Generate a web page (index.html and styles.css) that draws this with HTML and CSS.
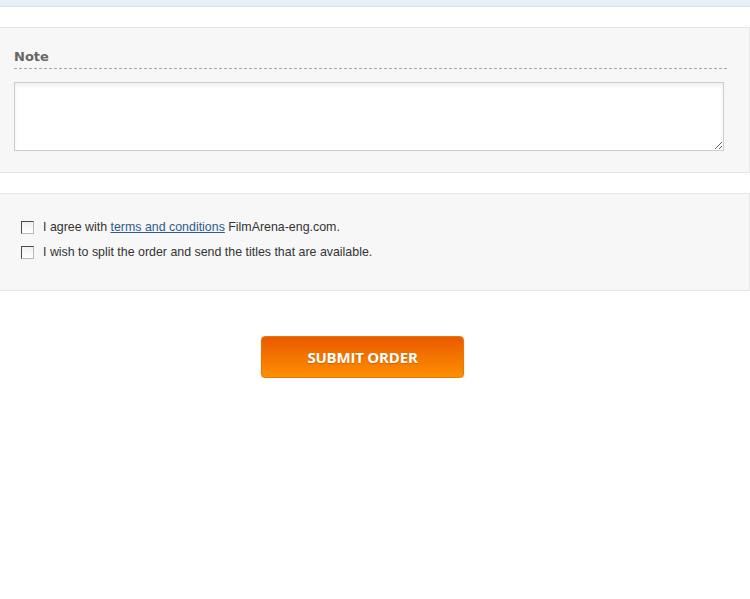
FILE: index.html
```html
<!DOCTYPE html>
<html lang="en">
  <head>
    <meta charset="UTF-8" />
    <meta name="viewport" content="width=device-width, initial-scale=1.0" />
    <title>Order - FilmArena</title>
    <link rel="stylesheet" href="styles.css">
  </head>
  <body>
    <div class="topbar"></div>

    <div class="panel note-panel">
      <h3 class="panel-title">Note</h3>
      <textarea id="note" class="note"></textarea>
    </div>

    <div class="panel agree-panel">
      <label class="check-row">
        <input type="checkbox" id="terms" />
        <span>I agree with <a href="#">terms and conditions</a> FilmArena-eng.com.</span>
      </label>
      <label class="check-row">
        <input type="checkbox" id="split" />
        <span>I wish to split the order and send the titles that are available.</span>
      </label>
    </div>

    <div class="submit-row">
      <button class="submit">SUBMIT ORDER</button>
    </div>
  </body>
</html>
```

FILE: styles.css
```css
body {
  margin: 0;
  padding: 0;
  background: #ffffff;
  font-family: "Liberation Sans", Arial, sans-serif;
  font-size: 12px;
  color: #333;
}

.topbar {
  height: 6px;
  background: #e6f0f6;
  border-bottom: 1px solid #d2e1ea;
}

.panel {
  background: #f7f7f7;
  border-top: 1px solid #e6e6e6;
  border-bottom: 1px solid #e6e6e6;
  border-right: 1px solid #e9e9e9;
}

.note-panel {
  margin-top: 20px;
  padding: 21px 22px 21px 14px;
}

.panel-title {
  margin: 0 0 13px;
  padding-bottom: 3px;
  font-family: "DejaVu Sans", Verdana, sans-serif;
  font-size: 13px;
  line-height: 16px;
  font-weight: bold;
  color: #666;
  border-bottom: 1px dashed #a9a9a9;
}

.note {
  display: block;
  width: 710px;
  height: 69px;
  box-sizing: border-box;
  margin: 0;
  padding: 4px;
  border: 1px solid #cccccc;
  background: #fff;
  box-shadow: inset 0 3px 4px rgba(0, 0, 0, 0.06);
  font-family: "Liberation Sans", Arial, sans-serif;
  font-size: 12px;
}

.agree-panel {
  margin-top: 20px;
  padding: 26px 0 30px 21px;
  display: flex;
  flex-direction: column;
  gap: 10px;
}

.check-row {
  display: flex;
  align-items: center;
  gap: 9px;
  font-size: 12.4px;
  line-height: 15px;
}

.check-row input {
  appearance: none;
  -webkit-appearance: none;
  margin: 0;
  width: 13px;
  height: 13px;
  box-sizing: border-box;
  border: 1px solid;
  border-color: #4a4a4a #b8b8b8 #b8b8b8 #4a4a4a;
  background: linear-gradient(#f0f0f0, #ffffff);
}

.check-row input:checked {
  background: #fff;
  box-shadow: inset 0 0 0 2px #fff, inset 0 0 0 5px #333;
}

.check-row a {
  color: #2f5b8c;
  text-decoration: underline;
}

.submit-row {
  padding: 45px 0 0 261px;
}

.submit {
  width: 203px;
  height: 42px;
  border: 1px solid #e67a00;
  border-radius: 4px;
  background: linear-gradient(#ea5a00, #fd8f00);
  box-shadow: 0 1px 2px rgba(0, 0, 0, 0.2);
  color: #fff;
  font-family: "Open Sans", sans-serif;
  font-size: 15px;
  font-weight: bold;
  letter-spacing: -0.2px;
  text-shadow: 0 1px 1px rgba(150, 50, 0, 0.35);
  cursor: pointer;
}

.submit:hover {
  background: linear-gradient(#f06400, #ff9a10);
}
```
